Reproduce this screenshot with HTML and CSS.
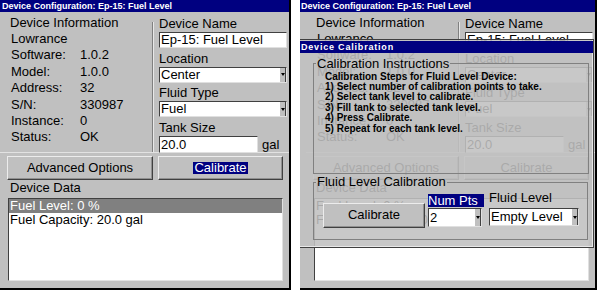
FILE: index.html
```html
<!DOCTYPE html>
<html lang="en">

<head>
    <meta charset="UTF-8">
    <meta name="viewport" content="width=device-width, initial-scale=1.0">
    <title>Device Configuration</title>
    <link rel="stylesheet" href="styles.css">
</head>

<body>
    <div class="screens">
        <section class="window">
            <header class="titlebar">Device Configuration: Ep-15: Fuel Level</header>
            <div class="window-body">
                <div class="config">
                    <div class="info">
                        <h2 class="group-title">Device Information</h2>
                        <div class="info-row"><span class="info-label">Lowrance</span></div>
                        <div class="info-row"><span class="info-label">Software:</span><span>1.0.2</span></div>
                        <div class="info-row"><span class="info-label">Model:</span><span>1.0.0</span></div>
                        <div class="info-row"><span class="info-label">Address:</span><span>32</span></div>
                        <div class="info-row"><span class="info-label">S/N:</span><span>330987</span></div>
                        <div class="info-row"><span class="info-label">Instance:</span><span>0</span></div>
                        <div class="info-row"><span class="info-label">Status:</span><span>OK</span></div>
                    </div>
                    <div class="settings">
                        <div class="field-label">Device Name</div>
                        <div class="textbox">Ep-15: Fuel Level</div>
                        <div class="field-label">Location</div>
                        <div class="combo"><span class="combo-value">Center</span><span class="combo-arrow"></span></div>
                        <div class="field-label">Fluid Type</div>
                        <div class="combo"><span class="combo-value">Fuel</span><span class="combo-arrow"></span></div>
                        <div class="field-label">Tank Size</div>
                        <div class="tank"><div class="textbox tank-box">20.0</div><span>gal</span></div>
                    </div>
                </div>
                <div class="actions">
                    <button class="btn btn-advanced">Advanced Options</button>
                    <button class="btn btn-calibrate"><span class="focus">Calibrate</span></button>
                </div>
                <div class="data-title">Device Data</div>
                <ul class="listbox">
                    <li class="selected">Fuel Level: 0 %</li>
                    <li>Fuel Capacity: 20.0 gal</li>
                </ul>
            </div>
        </section>

        <section class="window window-wide">
            <header class="titlebar">Device Configuration: Ep-15: Fuel Level</header>
            <div class="window-body">
                <div class="config">
                    <div class="info">
                        <h2 class="group-title">Device Information</h2>
                        <div class="info-row"><span class="info-label">Lowrance</span></div>
                        <div class="info-row"><span class="info-label">Software:</span><span>1.0.2</span></div>
                        <div class="info-row"><span class="info-label">Model:</span><span>1.0.0</span></div>
                        <div class="info-row"><span class="info-label">Address:</span><span>32</span></div>
                        <div class="info-row"><span class="info-label">S/N:</span><span>330987</span></div>
                        <div class="info-row"><span class="info-label">Instance:</span><span>0</span></div>
                        <div class="info-row"><span class="info-label">Status:</span><span>OK</span></div>
                    </div>
                    <div class="settings">
                        <div class="field-label">Device Name</div>
                        <div class="textbox">Ep-15: Fuel Level</div>
                        <div class="field-label">Location</div>
                        <div class="combo"><span class="combo-value">Center</span><span class="combo-arrow"></span></div>
                        <div class="field-label">Fluid Type</div>
                        <div class="combo"><span class="combo-value">Fuel</span><span class="combo-arrow"></span></div>
                        <div class="field-label">Tank Size</div>
                        <div class="tank"><div class="textbox tank-box">20.0</div><span>gal</span></div>
                    </div>
                </div>
                <div class="actions">
                    <button class="btn btn-advanced">Advanced Options</button>
                    <button class="btn btn-calibrate"><span>Calibrate</span></button>
                </div>
                <div class="data-title">Device Data</div>
                <ul class="listbox">
                    <li>Fuel Level: 0 %</li>
                    <li>Fuel Capacity: 20.0 gal</li>
                </ul>
            </div>

            <div class="dialog">
                <header class="titlebar dialog-title">Device Calibration</header>
                <fieldset class="group group-steps">
                    <legend>Calibration Instructions</legend>
                    <div class="steps">
                        <div>Calibration Steps for Fluid Level Device:</div>
                        <div>1) Select number of calibration points to take.</div>
                        <div>2) Select tank level to calibrate.</div>
                        <div>3) Fill tank to selected tank level.</div>
                        <div>4) Press Calibrate.</div>
                        <div>5) Repeat for each tank level.</div>
                    </div>
                </fieldset>
                <fieldset class="group group-cal">
                    <legend>Fluid Level Calibration</legend>
                    <div class="cal-row">
                        <button class="btn btn-dialog">Calibrate</button>
                        <div class="num-col">
                            <div class="num-label">Num Pts</div>
                            <div class="combo num-combo"><span class="combo-value">2</span><span class="combo-arrow"></span></div>
                        </div>
                        <div class="level-col">
                            <div class="level-label">Fluid Level</div>
                            <div class="combo level-combo"><span class="combo-value">Empty Level</span><span class="combo-arrow"></span></div>
                        </div>
                    </div>
                </fieldset>
            </div>
        </section>
    </div>
</body>

</html>
```

FILE: styles.css
```css
* {
    box-sizing: border-box;
}

body {
    margin: 0;
    background: #fff;
    font-family: "Liberation Sans", Arial, sans-serif;
    font-size: 13px;
    color: #000;
}

.screens {
    display: flex;
    gap: 9px;
}

.window {
    position: relative;
    width: 291px;
    height: 290px;
    background: #c0c0c0;
    border-right: 2px solid #000;
    border-bottom: 2px solid #000;
    overflow: hidden;
}

.window-wide {
    width: 297px;
}

.window-wide .window-body {
    padding-left: 6px;
}

.titlebar {
    height: 12px;
    padding-left: 2px;
    background: #000080;
    color: #fff;
    font-size: 9px;
    font-weight: bold;
    line-height: 12px;
    white-space: nowrap;
}

.window-wide .titlebar {
    padding-left: 1px;
}

.config {
    display: flex;
    height: 141px;
    border-bottom: 1px solid #e2e2e2;
}

.info {
    width: 152px;
    padding: 3px 0 0 10px;
}

.group-title {
    margin: 0;
    font-size: 13px;
    font-weight: normal;
    line-height: 16px;
}

.info-row {
    display: flex;
    padding-left: 1px;
    line-height: 16.4px;
}

.info-label {
    width: 69px;
}

.settings {
    flex: 1;
    margin-top: 10px;
    padding: 0 2px 0 6px;
    border-left: 1px solid #808080;
    box-shadow: inset 1px 0 0 #e8e8e8;
}

.field-label {
    margin-top: 2.5px;
    line-height: 16px;
}

.field-label:first-child {
    margin-top: -6px;
}

.textbox {
    height: 16px;
    padding-left: 1px;
    background: #fff;
    border: 1px solid;
    border-color: #404040 #e0e0e0 #e0e0e0 #404040;
    line-height: 14px;
    white-space: nowrap;
}

.combo {
    display: flex;
    height: 16px;
    background: #fff;
    border: 1px solid;
    border-color: #404040 #e0e0e0 #e0e0e0 #404040;
}

.combo-value {
    flex: 1;
    padding-left: 1px;
    line-height: 14px;
    white-space: nowrap;
}

.combo-arrow {
    display: flex;
    align-items: center;
    justify-content: center;
    width: 7px;
    background: #c0c0c0;
    border-left: 1px solid #fff;
    border-right: 1px solid #404040;
}

.combo-arrow::after {
    content: "";
    border-left: 2px solid transparent;
    border-right: 2px solid transparent;
    border-top: 3px solid #000;
}

.tank {
    display: flex;
    align-items: center;
    gap: 4px;
}

.tank-box {
    width: 99px;
    height: 17px;
    line-height: 15px;
}

.actions {
    display: flex;
    gap: 5px;
    padding: 3px 0 0 7px;
}

.btn {
    height: 24px;
    padding: 0 0 2px;
    background: #c0c0c0;
    border: 1px solid;
    border-color: #ececec #404040 #404040 #ececec;
    box-shadow: inset -1px -1px 0 #909090;
    font-family: inherit;
    font-size: 13px;
    color: #000;
}

.btn-advanced {
    width: 146px;
}

.btn-calibrate {
    width: 125px;
}

.focus {
    display: inline-block;
    padding: 0 1px;
    background: #000080;
    color: #fff;
    line-height: 12px;
}

.data-title {
    padding-left: 10px;
    line-height: 16px;
}

.listbox {
    width: 275px;
    height: 83px;
    margin: 2px 0 0 8px;
    padding: 0;
    list-style: none;
    background: #fff;
    border: 1px solid;
    border-color: #404040 #e0e0e0 #e0e0e0 #404040;
}

.listbox li {
    padding-left: 1px;
    line-height: 14px;
}

.listbox .selected {
    background: #808080;
    color: #fff;
}

/* calibration dialog laid over the second window */
.dialog {
    position: absolute;
    left: 0;
    top: 39px;
    width: 294px;
    height: 209px;
    padding-top: 1px;
    background: rgba(192, 192, 192, 0.88);
    border-top: 1px solid #404040;
    border-right: 1px solid #404040;
    border-bottom: 1px solid #404040;
    box-shadow: inset -1px -1px 0 #e8e8e8;
}

.dialog-title {
    padding-left: 1px;
    letter-spacing: 0.8px;
}

.group {
    margin: 0 0 0 13px;
    padding: 0 0 0 2px;
    border: 1px solid #808080;
}

.group legend {
    padding: 0 1px;
    line-height: 16px;
}

.group-steps {
    width: 276px;
    height: 118.5px;
    margin-top: 2.5px;
}

.steps {
    margin-left: 9px;
    font-size: 10px;
    font-weight: bold;
    line-height: 10.4px;
}

.group-cal {
    width: 275px;
    height: 66px;
}

.cal-row {
    display: flex;
    align-items: flex-start;
    margin-left: 7px;
}

.btn-dialog {
    width: 102px;
    height: 25px;
    margin-top: 13px;
}

.num-col {
    width: 56px;
    margin-left: 3px;
}

.num-label {
    margin-top: 4px;
    height: 13px;
    background: #000080;
    color: #fff;
    line-height: 13px;
}

.num-combo {
    width: 54px;
    height: 19px;
    margin-top: 1px;
}

.num-combo .combo-value {
    line-height: 17px;
}

.level-col {
    width: 90px;
    margin-left: 5px;
}

.level-label {
    line-height: 16px;
}

.level-combo {
    height: 18px;
    margin-top: 2px;
}

.level-combo .combo-value {
    line-height: 16px;
}
```
